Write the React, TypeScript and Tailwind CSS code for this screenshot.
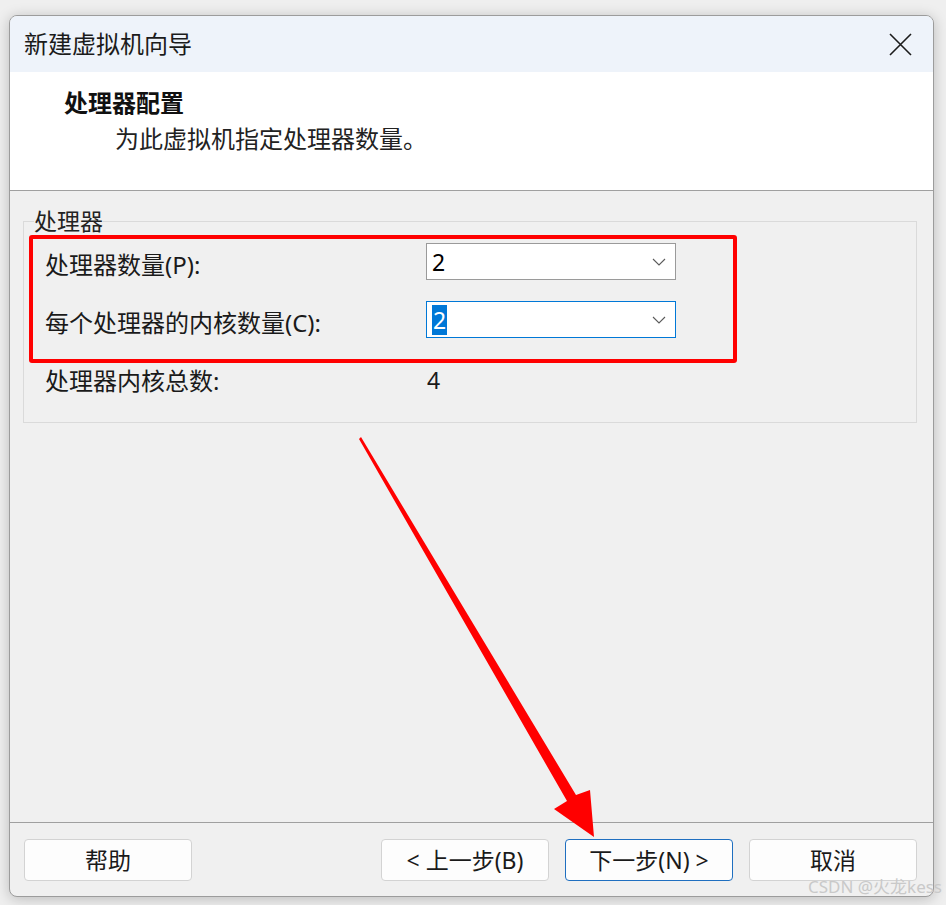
import React from "react";

const font = { fontFamily: '"Noto Sans", "Noto Sans CJK SC", sans-serif' };

const Chevron = () => (
  <svg width="14" height="8" viewBox="0 0 14 8" className="shrink-0">
    <path d="M1 1 L7 7 L13 1" fill="none" stroke="#5a5a5a" strokeWidth="1.1" />
  </svg>
);

const Combo = ({ value, focused }: { value: string; focused?: boolean }) => (
  <div
    className={
      "w-[250px] h-[37px] bg-white flex items-center justify-between pl-[5px] pr-[9px] border " +
      (focused ? "border-[#0078d7]" : "border-[#9a9a9a]")
    }
  >
    {focused ? (
      <span className="bg-[#0078d7] text-white text-[23px] leading-[30px] px-[1px]">{value}</span>
    ) : (
      <span className="text-black text-[23px] leading-[30px]">{value}</span>
    )}
    <Chevron />
  </div>
);

const WinButton = ({ label, primary }: { label: string; primary?: boolean }) => (
  <button
    className={
      "w-[168px] h-[42px] rounded-[4px] bg-[#fdfdfd] text-[23px] text-[#1a1a1a] border " +
      (primary ? "border-[#1f6fc0]" : "border-[#d3d3d3]")
    }
  >
    {label}
  </button>
);

export default function App() {
  return (
    <div className="relative w-[946px] h-[905px] bg-[#efefef] pl-[9px] pt-[15px] overflow-hidden" style={font}>
      {/* dialog window */}
      <div className="w-[925px] h-[882px] rounded-[8px] border border-[#9c9c9c] bg-[#f0f0f0] flex flex-col overflow-hidden shadow-[0_2px_14px_rgba(0,0,0,0.22)]">
        {/* title bar */}
        <div className="h-[56px] bg-[#eef3fa] flex items-center justify-between pl-[14px] pr-[21px]">
          <span className="text-[24px] text-[#1b1b1b]">新建虚拟机向导</span>
          <svg width="23" height="23" viewBox="0 0 23 23">
            <path d="M1 1 L22 22 M22 1 L1 22" stroke="#1b1b1b" strokeWidth="1.6" />
          </svg>
        </div>

        {/* header */}
        <div className="h-[119px] bg-white border-b border-[#a0a0a0] pl-[54px] pt-[16px] flex flex-col gap-[6px]">
          <div className="text-[24px] leading-[30px] font-bold text-[#111]">处理器配置</div>
          <div className="text-[24px] leading-[30px] text-[#222] pl-[51px]">为此虚拟机指定处理器数量。</div>
        </div>

        {/* body */}
        <div className="flex-1 pl-[13px] pr-[16px] pt-[18px]">
          <fieldset className="border border-[#dadada] pl-[21px] pb-[23px]">
            <legend className="-ml-[11px] text-[23px] leading-[24px] text-[#222]">处理器</legend>
            <div className="flex flex-col pt-[10px]">
              <div className="flex items-center h-[37px]">
                <span className="w-[381px] text-[24px] leading-[30px] pt-[6px] text-[#1a1a1a]">处理器数量(P):</span>
                <Combo value="2" />
              </div>
              <div className="flex items-center h-[37px] mt-[21px]">
                <span className="w-[381px] text-[24px] leading-[30px] pt-[6px] text-[#1a1a1a]">每个处理器的内核数量(C):</span>
                <Combo value="2" focused />
              </div>
              <div className="flex items-center h-[37px] mt-[24px]">
                <span className="w-[381px] text-[24px] leading-[30px] pt-[1px] text-[#1a1a1a]">处理器内核总数:</span>
                <span className="pl-[1px] text-[23px] text-[#1a1a1a]">4</span>
              </div>
            </div>
          </fieldset>
        </div>

        {/* footer */}
        <div className="h-[74px] border-t border-[#a0a0a0] flex items-start pt-[16px] pl-[14px] pr-[16px]">
          <WinButton label="帮助" />
          <div className="flex-1" />
          <div className="flex gap-[16px]">
            <WinButton label="< 上一步(B)" />
            <WinButton label="下一步(N) >" primary />
            <WinButton label="取消" />
          </div>
        </div>
      </div>

      {/* red annotation box */}
      <div className="absolute left-[29px] top-[235px] w-[708px] h-[128px] border-4 border-[#ff0000] rounded-[3px] pointer-events-none" />

      {/* red annotation arrow */}
      <svg className="absolute left-0 top-0 pointer-events-none" width="946" height="905" viewBox="0 0 946 905">
        <polygon
          points="361,437 359,439 567,801 554,809 594,837 590,790 576,795"
          fill="#ff0000"
        />
      </svg>

      {/* watermark */}
      <div className="absolute right-[4px] top-[877px] text-[17px] leading-[20px] text-[#c9c9c9] pointer-events-none">
        CSDN @火龙kess
      </div>
    </div>
  );
}
